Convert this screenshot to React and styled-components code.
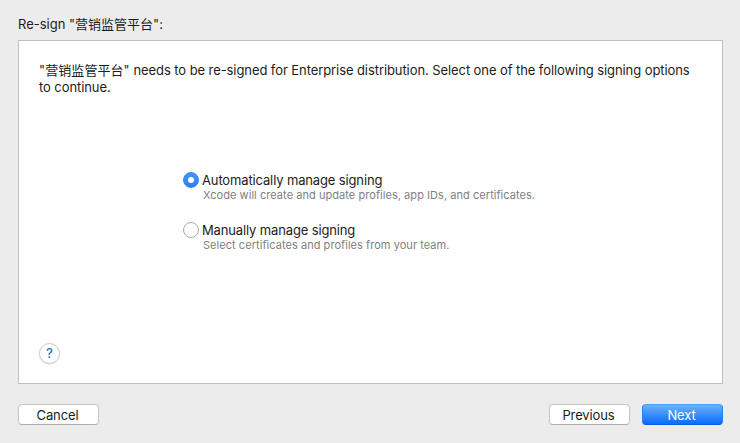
import React from 'react';
import styled, { createGlobalStyle, css } from 'styled-components';

const Global = createGlobalStyle`
  * { box-sizing: border-box; }
  body { margin: 0; background: #ececec; }
`;

const Window = styled.main`
  width: 740px;
  height: 443px;
  display: flex;
  flex-direction: column;
  padding: 16px 17px 17px 18px;
  background: #ececec;
  color: #1c1c1c;
  font-family: Inter, 'Noto Sans CJK SC', sans-serif;
  font-size: 13px;
  line-height: 17px;
`;

const Title = styled.h1`
  margin: 0 0 7px;
  height: 17px;
  font-size: 13px;
  font-weight: 400;
  line-height: 17px;
  white-space: nowrap;
`;

const Line = styled.span`
  display: block;
  width: max-content;
  height: 17px;
  white-space: nowrap;
  letter-spacing: ${(p) => p.$spacing || 0}px;
`;

const AppName = styled.span`
  letter-spacing: 0.08px;
`;

const Panel = styled.section`
  height: 344px;
  display: flex;
  flex-direction: column;
  padding: 21px 20px 19px;
  background: #fff;
  border: 1px solid #c0c0c0;
`;

const Message = styled.p`
  margin: 0;
`;

const Options = styled.div`
  display: flex;
  flex-direction: column;
  gap: 18px;
  margin: 76px 0 auto 144px;
`;

const Option = styled.label`
  display: grid;
  grid-template-columns: 16px auto;
  column-gap: 3px;
  height: 32px;
`;

const Radio = styled.span`
  width: 16px;
  height: 16px;
  display: grid;
  place-items: center;
  border-radius: 50%;
  border: 1px solid #a9a9a9;
  background: #fff;
  ${(p) => p.$checked && css`
    border-color: #3484f2;
    background: linear-gradient(#4494f6, #2c80f4);
    &::after {
      content: '';
      width: 6px;
      height: 6px;
      border-radius: 50%;
      background: #fff;
    }
  `}
`;

const Hint = styled.span`
  display: block;
  width: max-content;
  height: 14px;
  margin: -1px 0 0 1px;
  color: #808080;
  font-size: 11px;
  line-height: 14px;
  white-space: nowrap;
  letter-spacing: 0.05px;
`;

const Help = styled.button`
  width: 21px;
  height: 21px;
  padding: 0;
  border: 1px solid #c8c8c8;
  border-radius: 50%;
  background: #fff;
  color: #1f74b8;
  font: 500 13px/19px Inter, sans-serif;
  box-shadow: 0 1px 1px #0001;
`;

const Footer = styled.footer`
  display: flex;
  margin-top: 20px;
  gap: 12px;
`;

const Button = styled.button`
  width: 81px;
  height: 21px;
  padding: 0 2px 0 0;
  margin-right: ${(p) => (p.$leading ? 'auto' : '0')};
  border: 1px solid #c5c5c5;
  border-bottom-color: #adadad;
  border-radius: 4px;
  background: #fff;
  color: #1c1c1c;
  font: 400 13px/18px Inter, sans-serif;
  letter-spacing: -0.12px;
  ${(p) => p.$primary && css`
    color: #fff;
    border-color: #4aa0f8 #2581f3 #0a5ee5;
    background: linear-gradient(#6bb2fa, #0a6cfb);
  `}
`;

export default function App() {
  return (
    <>
      <Global />
      <Window>
        <Title><Line>Re-sign "营销监管平台":</Line></Title>
        <Panel>
          <Message>
            <Line $spacing={-0.083}>
              <AppName>"营销监管平台" </AppName>
              needs to be re-signed for Enterprise distribution. Select one of the following signing options
            </Line>
            <Line $spacing={-0.08}>to continue.</Line>
          </Message>
          <Options>
            <Option>
              <Radio $checked />
              <div>
                <Line $spacing={-0.14}>Automatically manage signing</Line>
                <Hint>Xcode will create and update profiles, app IDs, and certificates.</Hint>
              </div>
            </Option>
            <Option>
              <Radio />
              <div>
                <Line $spacing={-0.14}>Manually manage signing</Line>
                <Hint>Select certificates and profiles from your team.</Hint>
              </div>
            </Option>
          </Options>
          <Help>?</Help>
        </Panel>
        <Footer>
          <Button $leading>Cancel</Button>
          <Button>Previous</Button>
          <Button $primary>Next</Button>
        </Footer>
      </Window>
    </>
  );
}
